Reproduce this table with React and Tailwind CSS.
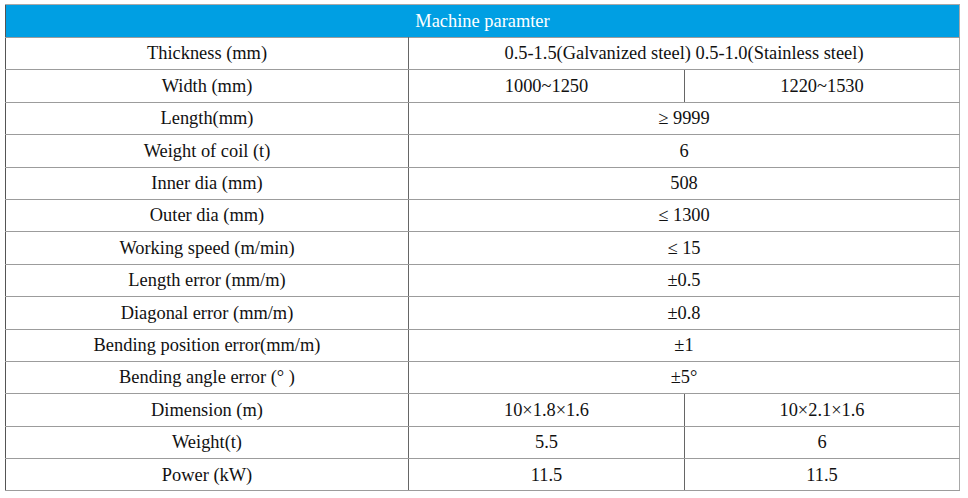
import React from "react";

const rows = [
  ["Thickness (mm)", "0.5-1.5(Galvanized steel) 0.5-1.0(Stainless steel)"],
  ["Width (mm)", "1000~1250", "1220~1530"],
  ["Length(mm)", "≥ 9999"],
  ["Weight of coil (t)", "6"],
  ["Inner dia (mm)", "508"],
  ["Outer dia (mm)", "≤ 1300"],
  ["Working speed (m/min)", "≤ 15"],
  ["Length error (mm/m)", "±0.5"],
  ["Diagonal error (mm/m)", "±0.8"],
  ["Bending position error(mm/m)", "±1"],
  ["Bending angle error (° )", "±5°"],
  ["Dimension (m)", "10×1.8×1.6", "10×2.1×1.6"],
  ["Weight(t)", "5.5", "6"],
  ["Power (kW)", "11.5", "11.5"],
];

const cell = "border-y border-[#9c9c9c] text-center align-middle p-0";

export default function App() {
  return (
    <div className="w-[968px] h-[498px] bg-white pt-[4px] pl-[5px]" style={{ fontFamily: '"Liberation Serif", "Times New Roman", serif' }}>
      <table className="table-fixed border-collapse w-[954px] text-[18.4px] leading-none text-[#111] border-l border-l-[#555] border-r border-r-[#a8a8a8]">
        <colgroup>
          <col className="w-[403px]" />
          <col className="w-[276px]" />
          <col className="w-[275px]" />
        </colgroup>
        <thead>
          <tr className="h-[33px]">
            <th colSpan={3} className="bg-[#009fe3] text-white font-normal text-center border-t border-[#a8a8a8] p-0">
              Machine paramter
            </th>
          </tr>
        </thead>
        <tbody>
          {rows.map((r, i) => (
            <tr key={i} className="h-[32.4px]">
              <td className={`${cell} border-r border-r-[#666]`}>{r[0]}</td>
              {r.length === 2 ? (
                <td colSpan={2} className={cell}>{r[1]}</td>
              ) : (
                <>
                  <td className={`${cell} border-r border-r-[#666]`}>{r[1]}</td>
                  <td className={cell}>{r[2]}</td>
                </>
              )}
            </tr>
          ))}
        </tbody>
      </table>
    </div>
  );
}
